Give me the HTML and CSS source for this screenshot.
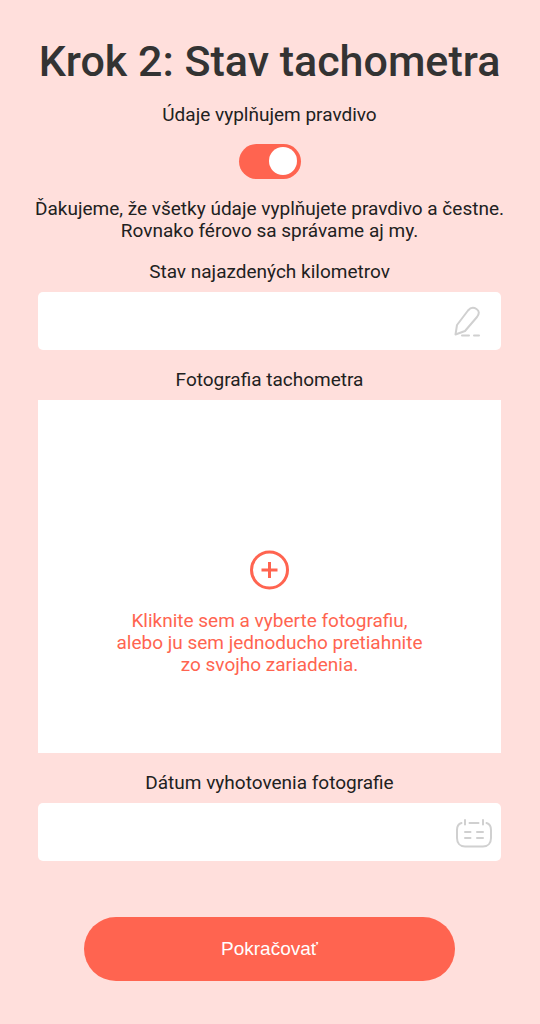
FILE: index.html
```html
<!DOCTYPE html>
<html lang="sk">
<head>
<meta charset="utf-8">
<meta name="viewport" content="width=device-width, initial-scale=1">
<title>Krok 2: Stav tachometra</title>
<link rel="stylesheet" href="styles.css">
</head>
<body>
<main class="step">
  <h1 class="title">Krok 2: Stav tachometra</h1>
  <form class="form">
    <div class="consent">
      <label for="truthful">Údaje vyplňujem pravdivo</label>
      <input class="toggle" type="checkbox" role="switch" id="truthful" checked>
    </div>
    <p class="thanks">Ďakujeme, že všetky údaje vyplňujete pravdivo a čestne. Rovnako férovo sa správame aj my.</p>
    <div class="field">
      <label for="mileage">Stav najazdených kilometrov</label>
      <div class="control">
        <input class="input" type="text" inputmode="numeric" id="mileage">
        <svg class="icon" viewBox="0 0 40 40" aria-hidden="true">
          <path d="M1.500 33.500 3 24 14 9.500C16.500 6.500 19.500 6 22.500 8S25.500 12.500 23 16L11 30Z"/>
          <path d="M8 34.500H15M20 34.500H25"/>
        </svg>
      </div>
    </div>
    <div class="field">
      <span id="photo-label">Fotografia tachometra</span>
      <label class="drop">
        <input class="file" type="file" accept="image/*" aria-labelledby="photo-label">
        <svg class="plus" viewBox="0 0 40 40" aria-hidden="true">
          <circle cx="19.500" cy="20" r="18"/>
          <path d="M19.500 12V28M11.500 20H27.500"/>
        </svg>
        <span>Kliknite sem a vyberte fotografiu,<br>alebo ju sem jednoducho pretiahnite<br>zo svojho zariadenia.</span>
      </label>
    </div>
    <div class="field">
      <label for="photo-date">Dátum vyhotovenia fotografie</label>
      <div class="control">
        <input class="input" type="text" id="photo-date">
        <svg class="icon" viewBox="0 0 40 40" aria-hidden="true">
          <path d="M7.500 11C4 12 3 15 3 18V26C3 31 6 34.500 11 34.500H29C34 34.500 37 31 37 26V18C37 15 36 12 32.500 11"/>
          <path d="M11 8V12.500M29 8V12.500M15.500 11H24.500M11 20H16.500M23 20H29M11 26H16.500M23 26H29"/>
        </svg>
      </div>
    </div>
    <button class="submit" type="submit">Pokračovať</button>
  </form>
</main>
</body>
</html>
```
FILE: styles.css
```css
* {
  box-sizing: border-box;
}

body {
  margin: 0;
  min-height: 100vh;
  background: #ffdfdc;
  color: #212121;
  font: 19px/22px Roboto, "Liberation Sans", sans-serif;
  text-align: center;
}

.step {
  padding: 34px 39px 43px 38px;
}

.title {
  margin: 0 -20px 15px;
  color: #333;
  font-size: 43px;
  line-height: 55px;
  font-weight: 500;
}

.form {
  display: flex;
  flex-direction: column;
  gap: 19px;
}

.consent {
  display: flex;
  flex-direction: column;
  align-items: center;
  gap: 18px;
}

.toggle {
  appearance: none;
  display: flex;
  justify-content: flex-end;
  width: 62px;
  height: 35px;
  margin: 0;
  padding: 3px 4px;
  border-radius: 18px;
  background: #c8c8c8;
  cursor: pointer;
}

.toggle::before {
  content: "";
  width: 28px;
  height: 28px;
  border-radius: 50%;
  background: #fff;
}

.toggle:checked {
  background: #ff6450;
}

.toggle:not(:checked) {
  justify-content: flex-start;
}

.thanks {
  margin: 0 -10px;
}

.field {
  display: flex;
  flex-direction: column;
  gap: 9px;
}

.control {
  display: flex;
  align-items: center;
  height: 58px;
  padding-right: 7px;
  border-radius: 5px;
  background: #fff;
}

.input {
  flex: 1;
  min-width: 0;
  height: 100%;
  padding: 0 16px;
  border: 0;
  border-radius: 5px;
  background: transparent;
  font: inherit;
}

.icon {
  width: 40px;
  height: 40px;
  fill: none;
  stroke: #d0d0d0;
  stroke-width: 2;
  stroke-linecap: round;
  stroke-linejoin: round;
}

.drop {
  display: flex;
  flex-direction: column;
  align-items: center;
  gap: 20px;
  padding: 150px 10px 77px;
  background: #fff;
  color: #ff6450;
  cursor: pointer;
}

.file {
  position: absolute;
  width: 1px;
  height: 1px;
  opacity: 0;
}

.plus {
  width: 40px;
  height: 40px;
  fill: none;
  stroke: currentColor;
  stroke-width: 3;
}

.submit {
  height: 64px;
  margin: 37px 46px 0;
  border: 0;
  border-radius: 32px;
  background: #ff6450;
  color: #fff;
  font: 19px/22px "Liberation Sans", Arial, sans-serif;
  cursor: pointer;
}
```
